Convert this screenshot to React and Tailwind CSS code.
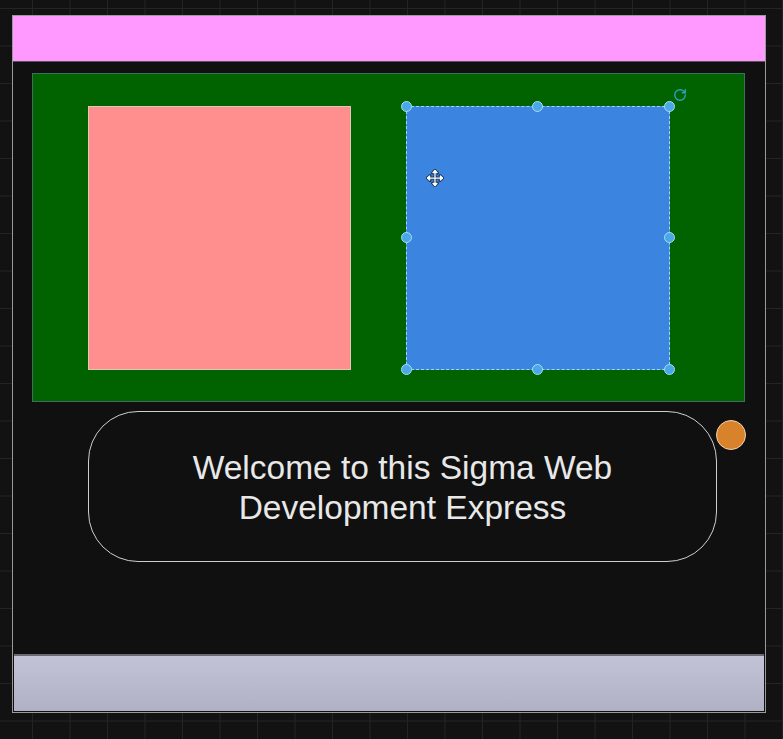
import { RotateCw } from 'lucide-react'

function Handle({ className }) {
  return <span className={`absolute w-[11px] h-[11px] rounded-full bg-[#4aa8e8] border border-[#a8dcf5] ${className}`} />
}

function MoveCursor() {
  return (
    <svg width="20" height="20" viewBox="0 0 24 24" className="absolute left-[18px] top-[61px]">
      <g stroke="#1b3550" strokeWidth="3.5" strokeLinecap="round" strokeLinejoin="round" fill="none">
        <path d="M12 3v18M3 12h18" />
        <path d="M9 6l3-3 3 3M9 18l3 3 3-3M6 9l-3 3 3 3M18 9l3 3-3 3" />
      </g>
      <g stroke="white" strokeWidth="1.5" strokeLinecap="round" strokeLinejoin="round" fill="white">
        <path d="M12 3v18M3 12h18" />
        <path d="M9.5 5.5L12 3l2.5 2.5zM9.5 18.5L12 21l2.5-2.5zM5.5 9.5L3 12l2.5 2.5zM18.5 9.5L21 12l-2.5 2.5z" />
      </g>
    </svg>
  )
}

export default function App() {
  return (
    <div className="min-h-[739px] w-full bg-[#121212] bg-[linear-gradient(to_right,#242424_1px,transparent_1px),linear-gradient(to_bottom,#242424_1px,transparent_1px)] bg-[size:37.5px_37.5px] bg-[position:32px_8px] pt-[15px] pl-[12px] overflow-hidden font-['Liberation_Sans',Arial,sans-serif]">
      <div className="w-[754px] h-[698px] bg-[#101010] border border-[#9a9a9a] flex flex-col">
        {/* header bar */}
        <div className="h-[46px] bg-[#ff99ff] border-b border-[#555]" />

        {/* green panel */}
        <div className="mt-[11px] ml-[19px] w-[713px] h-[329px] bg-[#006300] border border-[#3e6f5e] flex pt-[32px] pl-[55px] gap-[55px]">
          <div className="w-[263px] h-[264px] bg-[#ff8e8e] border border-[#e0c8b8]" />
          <div className="relative w-[264px] h-[264px] bg-[#3b84e0] border border-dashed border-[#9fd6ee]">
            <Handle className="-left-[6px] -top-[6px]" />
            <Handle className="left-[125px] -top-[6px]" />
            <Handle className="-right-[6px] -top-[6px]" />
            <Handle className="-left-[6px] top-[125px]" />
            <Handle className="-right-[6px] top-[125px]" />
            <Handle className="-left-[6px] -bottom-[6px]" />
            <Handle className="left-[125px] -bottom-[6px]" />
            <Handle className="-right-[6px] -bottom-[6px]" />
            <RotateCw className="absolute -right-[18px] -top-[19px] text-[#2a9fc0]" size={14} strokeWidth={2.5} />
            <MoveCursor />
          </div>
        </div>

        {/* welcome box */}
        <div className="relative mt-[9px] ml-[75px] w-[629px] h-[151px] rounded-[50px] border border-[#cfcfcf] flex items-center justify-center">
          <p className="text-[#e8e8e8] text-[33.5px] leading-[40px] text-center pt-[2px]">
            Welcome to this Sigma Web<br />Development Express
          </p>
          <span className="absolute -right-[30px] top-[8px] w-[30px] h-[30px] rounded-full bg-[#d8832c] border border-[#f2d2b0]" />
        </div>

        {/* footer bar */}
        <div className="mt-auto mx-px mb-px h-[57px] bg-[linear-gradient(to_bottom,#c3c3d7,#b1b1c6)] border-t-2 border-[#6a6a75]" />
      </div>
    </div>
  )
}
